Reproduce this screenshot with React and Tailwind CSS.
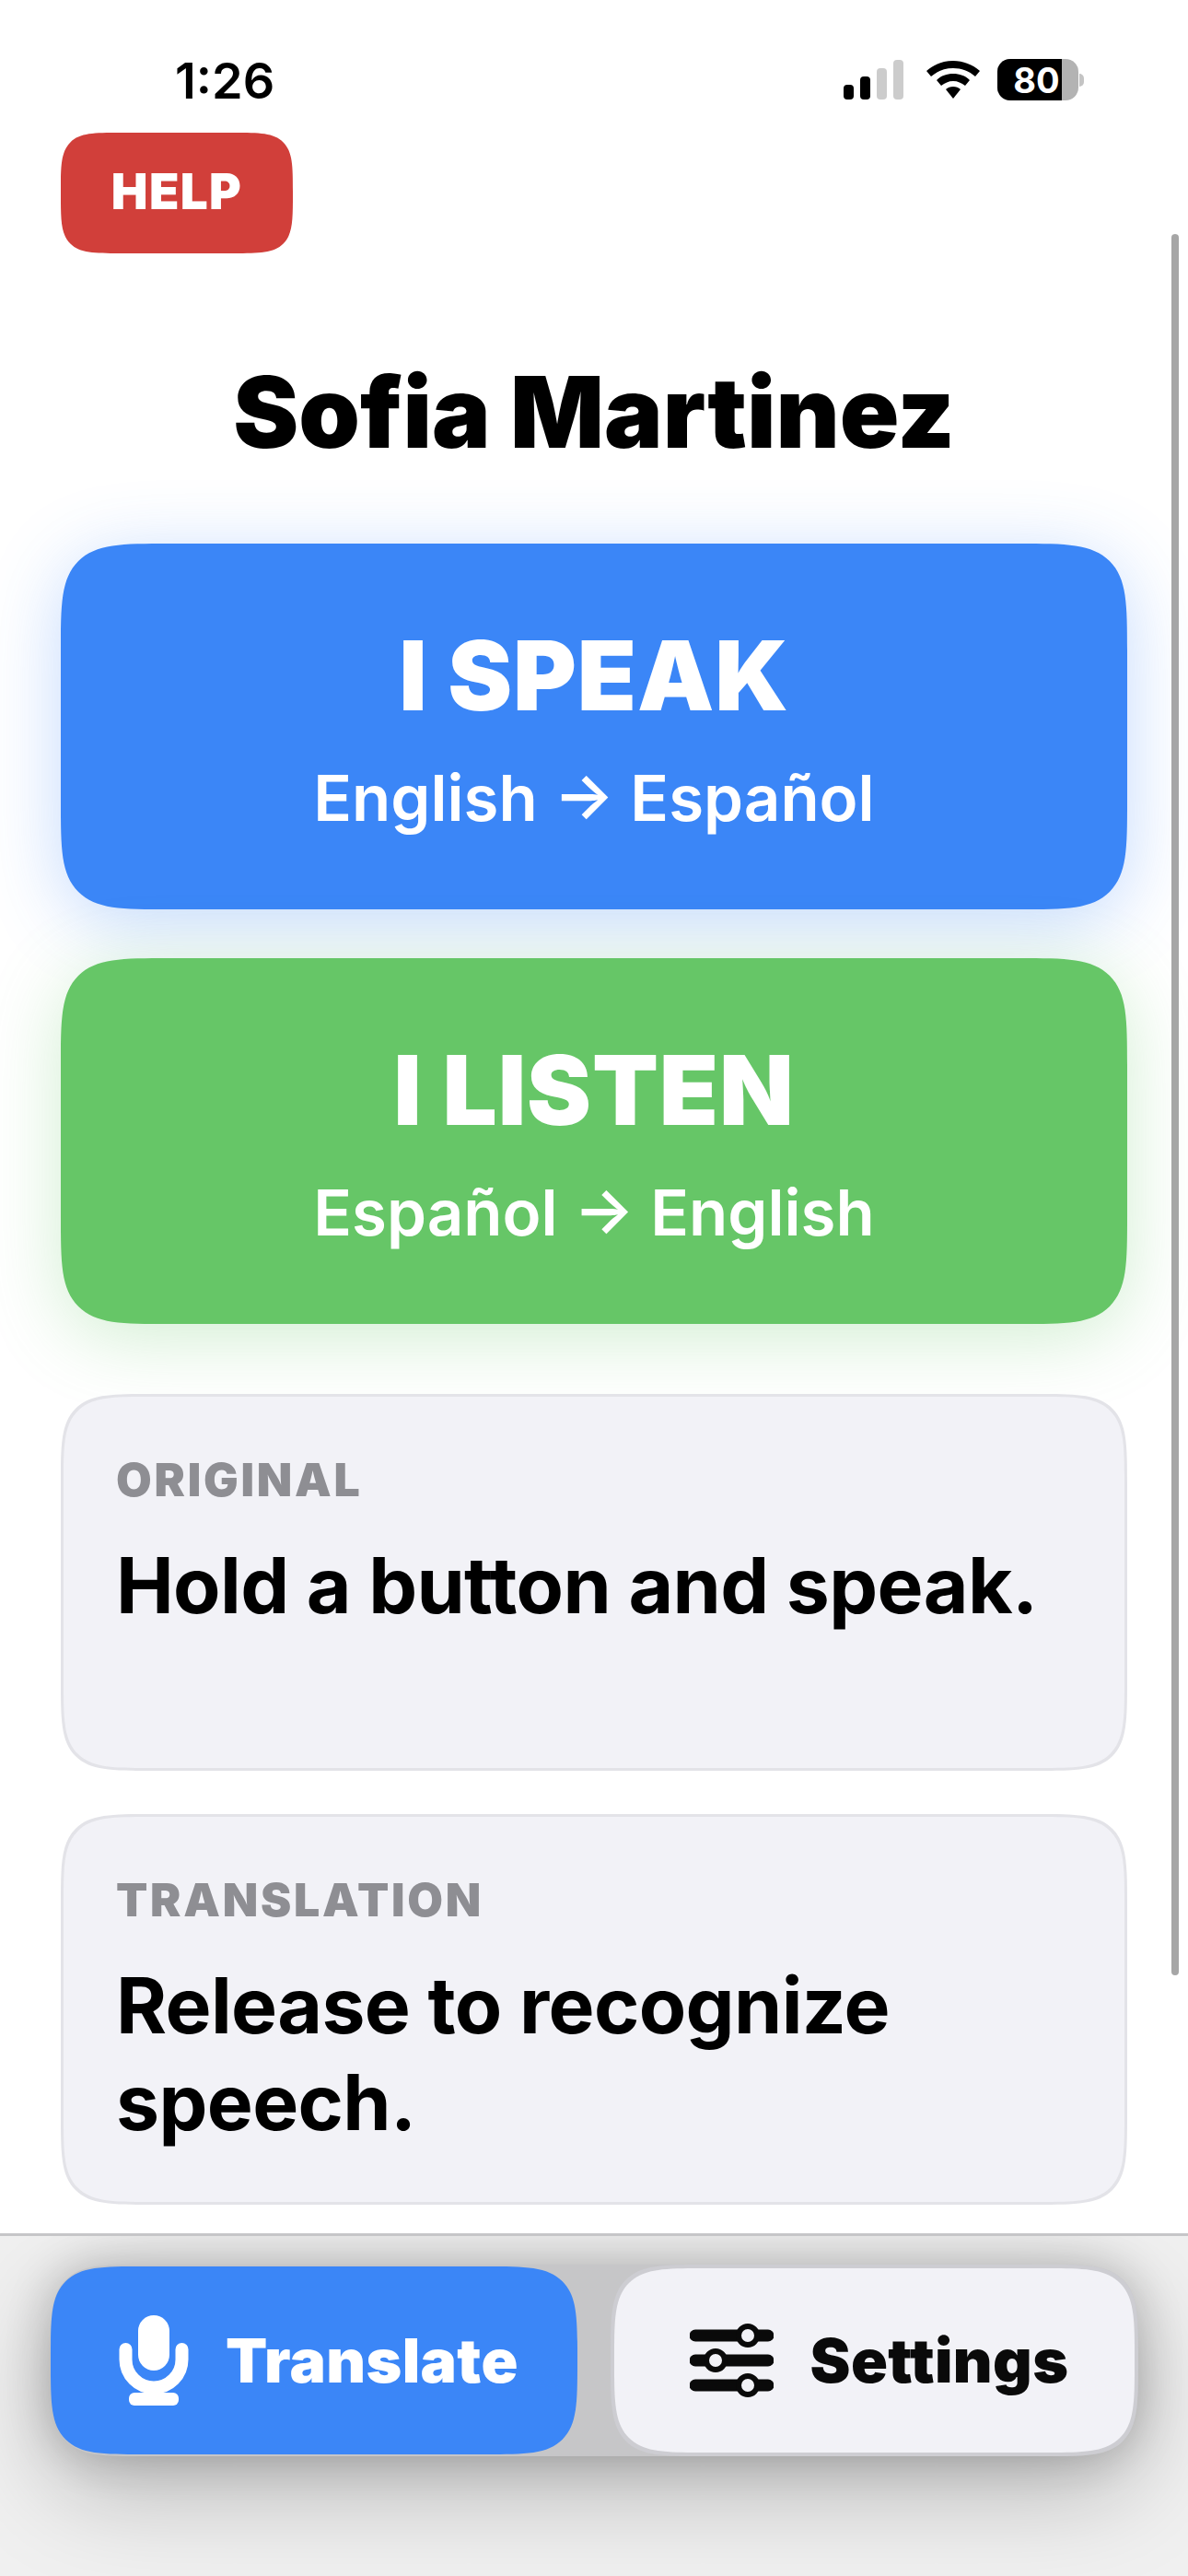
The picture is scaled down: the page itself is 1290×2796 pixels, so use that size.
import React from 'react';

const font = { fontFamily: 'Inter, "Liberation Sans", sans-serif' };

function StatusIcons() {
  return (
    <div className="flex items-center">
      <svg width="65" height="44" viewBox="0 0 65 44" className="mr-[25px]">
        <rect x="0" y="27" width="11" height="16" rx="4" fill="#000" />
        <rect x="18" y="18" width="11" height="25" rx="4" fill="#000" />
        <rect x="36" y="9" width="11" height="34" rx="4" fill="#cccccc" />
        <rect x="54" y="0" width="11" height="43" rx="4" fill="#cccccc" />
      </svg>
      <svg width="58" height="44" viewBox="0 0 58 44" className="mr-[19px]">
        <path d="M29 1C18 1 8 5 0 12l5 6c7-6 15-9 24-9s17 3 24 9l5-6C50 5 40 1 29 1Z" fill="#000" />
        <path d="M29 15c-7 0-13 2-18 7l5 6c4-3 8-5 13-5s9 2 13 5l5-6c-5-5-11-7-18-7Z" fill="#000" />
        <path d="M29 29c-3 0-6 1-8 3l8 10 8-10c-2-2-5-3-8-3Z" fill="#000" />
      </svg>
      <div className="flex items-center">
        <div className="relative w-[88px] h-[45px] rounded-[14px] bg-[#b3b3b3] overflow-hidden">
          <div className="h-full w-[70px] bg-black flex items-center justify-center pl-[15px]">
            <span className="text-white text-[38px] font-bold leading-none">80</span>
          </div>
        </div>
        <div className="w-[5px] h-[14px] ml-[1px] bg-[#c4c4c4] rounded-r-full" />
      </div>
    </div>
  );
}

function MicIcon() {
  return (
    <svg width="76" height="98" viewBox="0 0 76 98" fill="none">
      <rect x="21" y="0" width="34" height="60" rx="17" fill="#fff" />
      <path d="M7.5 37v11a30.5 30.5 0 0 0 61 0V37" stroke="#fff" strokeWidth="14" strokeLinecap="round" />
      <rect x="31" y="74" width="14" height="14" fill="#fff" />
      <rect x="11" y="84" width="54" height="14" rx="6" fill="#fff" />
    </svg>
  );
}

function SlidersIcon() {
  const rows = [
    { y: 13, knob: 63 },
    { y: 40, knob: 28 },
    { y: 67, knob: 63 },
  ];
  return (
    <svg width="91" height="80" viewBox="0 0 91 80" fill="none">
      {rows.map((row) => (
        <g key={row.y}>
          <line x1="6" x2="85" y1={row.y} y2={row.y} stroke="#0a0a0a" strokeWidth="13" strokeLinecap="round" />
          <circle cx={row.knob} cy={row.y} r="10" fill="#f2f2f7" stroke="#0a0a0a" strokeWidth="6" />
        </g>
      ))}
    </svg>
  );
}

function SpeechButton({ title, sub, colorClass }) {
  return (
    <button className={`w-full h-[397px] rounded-[120px] [corner-shape:squircle] flex flex-col items-center text-white ${colorClass}`}>
      <span className="mt-[88px] text-[105px] leading-[110px] font-black tracking-[0.008em]">{title}</span>
      <span className="mt-[38px] text-[69px] leading-[80px] font-semibold">{sub}</span>
    </button>
  );
}

function TextCard({ label, text, heightClass }) {
  return (
    <div className={`${heightClass} rounded-[100px] [corner-shape:squircle] bg-[#f2f2f7] border-[3px] border-[#e3e3e8] px-[57px] pt-[60px]`}>
      <div className="text-[50px] leading-[60px] font-black tracking-[0.055em] text-[#8e8e93]">{label}</div>
      <div className="mt-[32px] text-[84px] leading-[105px] font-bold tracking-[-0.0075em] text-black">{text}</div>
    </div>
  );
}

export default function App() {
  return (
    <div style={font} className="relative w-[1290px] h-[2796px] bg-white overflow-hidden flex flex-col">
      {/* status bar */}
      <div className="h-[144px] pl-[190px] pr-[113px] pt-[57px] flex justify-between items-start shrink-0">
        <span className="text-[54px] leading-[62px] font-semibold text-black">1:26</span>
        <div className="pt-[7px]">
          <StatusIcons />
        </div>
      </div>

      <main className="flex-1 px-[66px]">
        <button className="w-[252px] h-[131px] rounded-[80px] [corner-shape:squircle] bg-[#d13f3a] text-white text-[53px] pb-[2px] font-black tracking-[0.025em] flex items-center justify-center">
          HELP
        </button>

        <h1 className="mt-[108px] text-center text-[106.7px] leading-[130px] font-black text-black">Sofia Martinez</h1>

        <div className="mt-[77px] flex flex-col gap-[53px]">
          <SpeechButton title="I SPEAK" sub="English → Español" colorClass="bg-[#3b86f7] shadow-[0_14px_80px_rgba(59,134,247,0.3)]" />
          <SpeechButton title="I LISTEN" sub="Español → English" colorClass="bg-[#66c667] shadow-[0_14px_80px_rgba(102,198,103,0.3)]" />
        </div>

        <div className="mt-[76px] flex flex-col gap-[47px]">
          <TextCard label="ORIGINAL" text="Hold a button and speak." heightClass="h-[409px]" />
          <TextCard label="TRANSLATION" text="Release to recognize speech." heightClass="h-[424px]" />
        </div>
      </main>

      {/* bottom toolbar, one shared shadow sits behind both buttons */}
      <footer className="h-[372px] shrink-0 border-t-[3px] border-[#c6c6c8] bg-[#f0f0f0] pl-[55px] pt-[31px] overflow-hidden">
        <div className="w-[1181px] h-[208px] flex items-center gap-[36px] rounded-[110px] [corner-shape:squircle] bg-[#c6c6c8] shadow-[0_0_50px_rgba(0,0,0,0.2),0_34px_110px_rgba(0,0,0,0.26)]">
          <button className="w-[572px] h-[204px] shrink-0 pl-[10px] rounded-[110px] [corner-shape:squircle] bg-[#3b86f7] text-white flex items-center justify-center gap-[40px]">
            <MicIcon />
            <span className="text-[66px] font-black tracking-[0.006em]">Translate</span>
          </button>
          <button className="w-[573px] h-[208px] shrink-0 pl-[10px] rounded-[110px] [corner-shape:squircle] bg-[#f2f2f7] border-[4px] border-[#cdcdd2] text-[#0a0a0a] flex items-center justify-center gap-[40px]">
            <SlidersIcon />
            <span className="text-[66px] font-black tracking-[0.006em]">Settings</span>
          </button>
        </div>
      </footer>

      {/* scroll indicator */}
      <div className="absolute left-[1272px] top-[254px] w-[8px] h-[1890px] rounded-full bg-[#a6a6a6]" />
    </div>
  );
}
